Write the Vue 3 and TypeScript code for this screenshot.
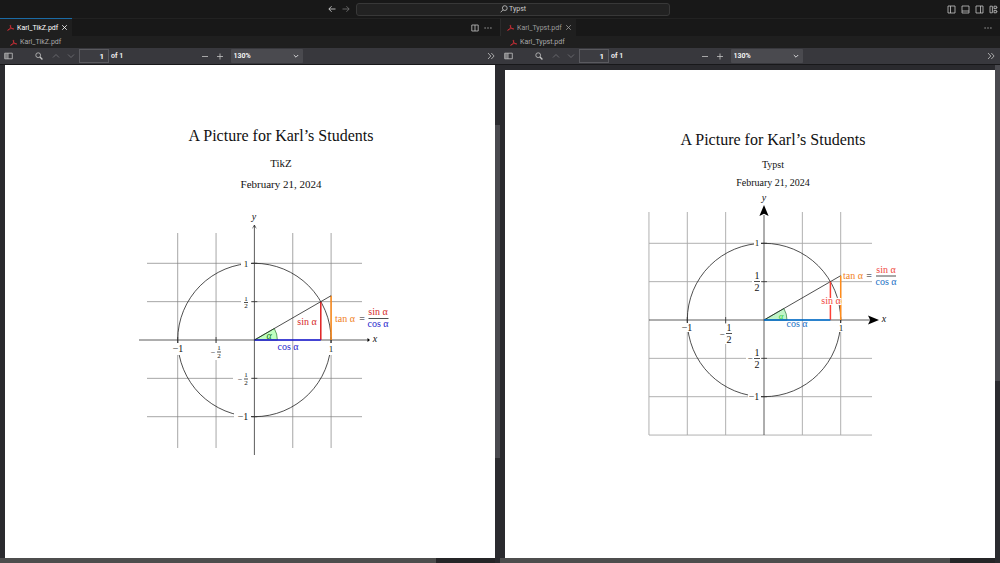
<script setup lang="ts">
import { ref } from 'vue'

interface Label {
  x: number
  y: number
  text: string
  kind?: string
  anchor?: 'start' | 'middle' | 'end'
  size?: number
}
interface Line {
  x1: number
  y1: number
  x2: number
  y2: number
  kind?: string
}
interface Box {
  x: number
  y: number
  w: number
  h: number
}
interface Figure {
  viewBox: string
  width: number
  height: number
  cx: number
  cy: number
  grid: Line[]
  boxes: Box[]
  axes: Line[]
  arrows: { d: string; filled: boolean }[]
  wedge: string
  shapes: Line[]
  labels: Label[]
  bars: Line[]
}
interface Pane {
  id: string
  file: string
  active: boolean
  title: string
  author: string
  date: string
  figure: Figure
}

const R = 76.7
const H = R / 2

function grid(cx: number, cy: number, xs: number[], ys: number[], x: [number, number], y: [number, number]): Line[] {
  return [
    ...xs.map((k) => ({ x1: cx + k * H, x2: cx + k * H, y1: y[0], y2: y[1] })),
    ...ys.map((k) => ({ y1: cy + k * H, y2: cy + k * H, x1: x[0], x2: x[1] })),
  ]
}

function wedge(cx: number, cy: number): string {
  return `M${cx} ${cy}h23a23 23 0 0 0 -3.1 -11.5z`
}

const tikz: Figure = {
  viewBox: '131 205 300 260',
  width: 300,
  height: 260,
  cx: 254.4,
  cy: 340,
  grid: grid(254.4, 340, [-2, -1, 1, 2], [-2, -1, 1, 2], [147, 362], [233, 448]),
  boxes: [
    { x: 241, y: 257, w: 10, h: 13 },
    { x: 241, y: 293, w: 10, h: 18 },
    { x: 233, y: 369, w: 18, h: 18 },
    { x: 234, y: 410, w: 17, h: 13 },
    { x: 168, y: 343, w: 19, h: 12 },
    { x: 208, y: 343, w: 15, h: 17 },
    { x: 327, y: 343, w: 8, h: 12 },
  ],
  axes: [
    { x1: 139, y1: 340, x2: 369, y2: 340 },
    { x1: 254.4, y1: 226, x2: 254.4, y2: 455 },
    ...[-2, -1, 2].map((k) => ({ x1: 254.4 + k * H, x2: 254.4 + k * H, y1: 337, y2: 343 })),
    ...[-2, -1, 1, 2].map((k) => ({ x1: 251.5, x2: 257.3, y1: 340 + k * H, y2: 340 + k * H })),
  ],
  arrows: [
    { d: 'M252.4 228Q254 227 254.4 225Q254.8 227 256.4 228', filled: false },
    { d: 'M367.5 338L370 340L367.5 342Z', filled: true },
  ],
  wedge: wedge(254.4, 340),
  shapes: [
    { x1: 320.8, y1: 340, x2: 320.8, y2: 301.7, kind: 'red wide' },
    { x1: 254.4, y1: 340, x2: 320.8, y2: 340, kind: 'blue wide' },
    { x1: 331.1, y1: 340, x2: 331.1, y2: 295.7, kind: 'orange wide' },
    { x1: 254.4, y1: 340, x2: 331.1, y2: 295.7, kind: 'ink' },
  ],
  labels: [
    { x: 254, y: 220, text: 'y', kind: 'it', size: 10 },
    { x: 375, y: 342, text: 'x', kind: 'it', size: 10 },
    { x: 246, y: 267, text: '1' },
    { x: 246, y: 301, text: '1', size: 7 },
    { x: 246, y: 308, text: '2', size: 7 },
    { x: 240, y: 382, text: '−', size: 8 },
    { x: 246, y: 377, text: '1', size: 7 },
    { x: 246, y: 385, text: '2', size: 7 },
    { x: 243, y: 420, text: '−1', size: 10 },
    { x: 178, y: 352, text: '−1', size: 10 },
    { x: 213, y: 355, text: '−', size: 8 },
    { x: 219, y: 350, text: '1', size: 7 },
    { x: 219, y: 358, text: '2', size: 7 },
    { x: 331, y: 352, text: '1' },
    { x: 269, y: 339, text: 'α', kind: 'it green', size: 10 },
    { x: 307, y: 325, text: 'sin α', kind: 'red', size: 10 },
    { x: 288, y: 350, text: 'cos α', kind: 'blue', size: 10 },
    { x: 335, y: 322, text: 'tan α', kind: 'orange', anchor: 'start', size: 10 },
    { x: 362, y: 322, text: '=', size: 10 },
    { x: 378, y: 315, text: 'sin α', kind: 'red', size: 10 },
    { x: 378, y: 327, text: 'cos α', kind: 'blue', size: 10 },
  ],
  bars: [
    { x1: 244, y1: 302.5, x2: 248, y2: 302.5 },
    { x1: 244, y1: 379, x2: 248, y2: 379 },
    { x1: 217, y1: 352, x2: 221, y2: 352 },
    { x1: 368.5, y1: 318.5, x2: 388.5, y2: 318.5 },
  ],
}

const typst: Figure = {
  viewBox: '633 190 280 260',
  width: 280,
  height: 260,
  cx: 764,
  cy: 320,
  grid: grid(764, 320, [-3, -2, -1, 1, 2], [-2, -1, 1, 2, 3], [649, 872], [212, 435]),
  boxes: [
    { x: 754, y: 238, w: 7, h: 10 },
    { x: 752, y: 270, w: 10, h: 23 },
    { x: 746, y: 347, w: 16, h: 23 },
    { x: 748, y: 392, w: 13, h: 9 },
    { x: 681, y: 323, w: 13, h: 9 },
    { x: 718, y: 324, w: 16, h: 20 },
    { x: 838, y: 323, w: 6, h: 9 },
  ],
  axes: [
    { x1: 649, y1: 320, x2: 870, y2: 320 },
    { x1: 764, y1: 215, x2: 764, y2: 435 },
    ...[-2, -1, 2].map((k) => ({ x1: 764 + k * H, x2: 764 + k * H, y1: 317, y2: 323 })),
    ...[-2, -1, 1, 2].map((k) => ({ x1: 761, x2: 767, y1: 320 + k * H, y2: 320 + k * H })),
  ],
  arrows: [
    { d: 'M764 205L768.6 216L764 213.8L759.4 216Z', filled: true },
    { d: 'M879 320L868 324.6L870.2 320L868 315.4Z', filled: true },
  ],
  wedge: wedge(764, 320),
  shapes: [
    { x1: 764, y1: 320, x2: 840.7, y2: 275.7, kind: 'ink' },
    { x1: 830.4, y1: 320, x2: 830.4, y2: 281.7, kind: 'coral wide' },
    { x1: 764, y1: 320, x2: 830.4, y2: 320, kind: 'azure wide' },
    { x1: 840.7, y1: 320, x2: 840.7, y2: 275.7, kind: 'orange wide' },
  ],
  labels: [
    { x: 764, y: 201, text: 'y', kind: 'it', size: 10 },
    { x: 884, y: 322, text: 'x', kind: 'it', size: 10 },
    { x: 757, y: 246, text: '1' },
    { x: 757, y: 279, text: '1', size: 10 },
    { x: 757, y: 291, text: '2', size: 10 },
    { x: 750, y: 361, text: '−' },
    { x: 757, y: 356, text: '1', size: 10 },
    { x: 757, y: 368, text: '2', size: 10 },
    { x: 754, y: 400, text: '−1', size: 10 },
    { x: 687, y: 331, text: '−1', size: 10 },
    { x: 722, y: 337, text: '−' },
    { x: 729, y: 331, text: '1', size: 10 },
    { x: 729, y: 343, text: '2', size: 10 },
    { x: 841, y: 331, text: '1' },
    { x: 781, y: 319, text: 'α', kind: 'it lime', size: 9 },
    { x: 831, y: 304, text: 'sin α', kind: 'coral halo', size: 10 },
    { x: 797, y: 327, text: 'cos α', kind: 'azure', size: 10 },
    { x: 843, y: 279, text: 'tan α', kind: 'orange', anchor: 'start', size: 10 },
    { x: 869, y: 279, text: '=', size: 10 },
    { x: 886, y: 273, text: 'sin α', kind: 'coral', size: 10 },
    { x: 886, y: 285, text: 'cos α', kind: 'azure', size: 10 },
  ],
  bars: [
    { x1: 754, y1: 281.5, x2: 760, y2: 281.5 },
    { x1: 754, y1: 358.5, x2: 760, y2: 358.5 },
    { x1: 726, y1: 333.5, x2: 732, y2: 333.5 },
    { x1: 876, y1: 276, x2: 896, y2: 276 },
  ],
}

const panes: Pane[] = [
  {
    id: 'tikz',
    file: 'Karl_TikZ.pdf',
    active: true,
    title: 'A Picture for Karl’s Students',
    author: 'TikZ',
    date: 'February 21, 2024',
    figure: tikz,
  },
  {
    id: 'typst',
    file: 'Karl_Typst.pdf',
    active: false,
    title: 'A Picture for Karl’s Students',
    author: 'Typst',
    date: 'February 21, 2024',
    figure: typst,
  },
]

const pageNumbers = ref(['1', '1'])
const zooms = ref(['130%', '130%'])

const pdfPath = 'M1 6.3C2.8 5.6 3.9 3.4 3.7 1.4C3.6 .7 3.1 .9 3.2 1.6C3.5 3.6 4.6 4.6 6.4 5.2C7 5.4 7 4.6 6.3 4.5C4.2 4.4 2.4 4.9 .9 5.8C.3 6.2 .5 6.6 1 6.3Z'
</script>

<template>
  <div class="window">
    <header class="titlebar">
      <div class="side"></div>
      <div class="center">
        <button class="icon bright" aria-label="Go back">
          <svg width="8" height="8" viewBox="0 0 8 8"><path d="M7.5 4H1M3.6 1.2L.8 4l2.8 2.8" /></svg>
        </button>
        <button class="icon dim" aria-label="Go forward">
          <svg width="8" height="8" viewBox="0 0 8 8"><path d="M.5 4H7M4.4 1.2L7.2 4L4.4 6.8" /></svg>
        </button>
        <button class="command">
          <svg width="8" height="8" viewBox="0 0 8 8"><circle cx="4.8" cy="3.1" r="2.4" /><path d="M3 4.8L.7 7.3" /></svg>
          <span>Typst</span>
        </button>
      </div>
      <div class="side layout">
        <button class="icon" aria-label="Toggle primary side bar">
          <svg width="9" height="9" viewBox="0 0 9 9"><path d="M1 1h7v7H1zM3.5 1v7" /></svg>
        </button>
        <button class="icon" aria-label="Toggle panel">
          <svg width="9" height="9" viewBox="0 0 9 9"><path d="M1 1h7v7H1zM1 6h7" /></svg>
        </button>
        <button class="icon" aria-label="Toggle secondary side bar">
          <svg width="9" height="9" viewBox="0 0 9 9"><path d="M1 1h7v7H1zM5.5 1v7" /></svg>
        </button>
        <button class="icon" aria-label="Customize layout">
          <svg width="9" height="9" viewBox="0 0 9 9"><path d="M1 1.2h2.4v6.6H1zM5 1.2h2.4v2.4H5zM5 5.4h2.4v2.4H5zM7.8 2.4h.7M7.8 6.6h.7" /></svg>
        </button>
      </div>
    </header>

    <main class="editors">
      <section v-for="(pane, i) in panes" :key="pane.id" class="pane" :class="pane.id" :aria-label="pane.file">
        <div class="tabs">
          <div class="tab" :class="{ active: pane.active }">
            <svg class="pdf" width="7" height="7" viewBox="0 0 7 7"><path :d="pdfPath" /></svg>
            <span>{{ pane.file }}</span>
            <button class="icon" aria-label="Close tab">
              <svg width="7" height="7" viewBox="0 0 7 7"><path d="M1.2 1.2l4.6 4.6M5.8 1.2L1.2 5.8" /></svg>
            </button>
          </div>
          <div class="actions">
            <button v-if="pane.active" class="icon" aria-label="Split editor">
              <svg width="8" height="8" viewBox="0 0 8 8"><path d="M.8 1h6.4v6H.8zM4 1v6" /></svg>
            </button>
            <button class="icon" aria-label="More actions">
              <svg width="8" height="8" viewBox="0 0 8 8"><path class="solid" d="M.5 3.4h1.2v1.2H.5zM3.4 3.4h1.2v1.2H3.4zM6.3 3.4h1.2v1.2H6.3z" /></svg>
            </button>
          </div>
        </div>
        <nav class="crumbs" aria-label="Breadcrumb">
          <svg class="pdf" width="7" height="7" viewBox="0 0 7 7"><path :d="pdfPath" /></svg>
          <span>{{ pane.file }}</span>
        </nav>

        <div class="toolbar">
          <div class="group">
            <button class="icon sidebar" aria-label="Toggle sidebar">
              <svg width="9" height="8" viewBox="0 0 9 8"><path d="M.7 1.2h7.6v5.6H.7zM4 1.2v5.6" /><path class="solid" d="M1 1.4h2.6v5.2H1z" opacity=".5" /></svg>
            </button>
            <button class="icon find" aria-label="Find">
              <svg width="8" height="8" viewBox="0 0 8 8"><circle cx="3.2" cy="3.2" r="2.4" /><path d="M5 5l2.4 2.5" stroke-width="1.3" /></svg>
            </button>
            <button class="icon faint" aria-label="Previous page">
              <svg width="8" height="8" viewBox="0 0 8 8"><path d="M1 5.5L4 2.5l3 3" /></svg>
            </button>
            <button class="icon faint next" aria-label="Next page">
              <svg width="8" height="8" viewBox="0 0 8 8"><path d="M1 2.5l3 3l3-3" /></svg>
            </button>
            <input v-model="pageNumbers[i]" class="page-number" aria-label="Page" />
            <span class="count">of 1</span>
          </div>
          <div class="group zoom">
            <button class="icon" aria-label="Zoom out">
              <svg width="8" height="8" viewBox="0 0 8 8"><path d="M1 4.5h6" /></svg>
            </button>
            <button class="icon" aria-label="Zoom in">
              <svg width="8" height="8" viewBox="0 0 8 8"><path d="M1 4.5h6M4 1.5v6" /></svg>
            </button>
            <div class="picker">
              <select v-model="zooms[i]" aria-label="Zoom">
                <option>100%</option>
                <option>130%</option>
                <option>200%</option>
              </select>
              <svg class="caret" width="6" height="6" viewBox="0 0 6 6"><path d="M.8 2L3 4.2L5.2 2" /></svg>
            </div>
          </div>
          <div class="group end">
            <button class="icon" aria-label="Tools">
              <svg width="8" height="8" viewBox="0 0 8 8"><path d="M1 1l2.8 3L1 7M4.3 1l2.8 3l-2.8 3" /></svg>
            </button>
          </div>
        </div>

        <div class="viewer">
          <div class="viewport">
            <article class="paper">
              <h1>{{ pane.title }}</h1>
              <p class="author">{{ pane.author }}</p>
              <p class="date">{{ pane.date }}</p>
              <svg
                class="figure"
                :width="pane.figure.width"
                :height="pane.figure.height"
                :viewBox="pane.figure.viewBox"
                role="img"
                aria-label="Sine, cosine and tangent on the unit circle"
              >
                <line v-for="(l, n) in pane.figure.grid" :key="'g' + n" class="grid" :x1="l.x1" :y1="l.y1" :x2="l.x2" :y2="l.y2" />
                <circle class="ink" :cx="pane.figure.cx" :cy="pane.figure.cy" :r="R" />
                <rect v-for="(b, n) in pane.figure.boxes" :key="'b' + n" class="mask" :x="b.x" :y="b.y" :width="b.w" :height="b.h" />
                <path class="wedge" :d="pane.figure.wedge" />
                <line v-for="(l, n) in pane.figure.axes" :key="'a' + n" class="axis" :x1="l.x1" :y1="l.y1" :x2="l.x2" :y2="l.y2" />
                <path v-for="(a, n) in pane.figure.arrows" :key="'h' + n" :class="a.filled ? 'head' : 'ink'" :d="a.d" />
                <line v-for="(l, n) in pane.figure.shapes" :key="'s' + n" :class="l.kind" :x1="l.x1" :y1="l.y1" :x2="l.x2" :y2="l.y2" />
                <line v-for="(l, n) in pane.figure.bars" :key="'f' + n" class="ink" :x1="l.x1" :y1="l.y1" :x2="l.x2" :y2="l.y2" />
                <text
                  v-for="(t, n) in pane.figure.labels"
                  :key="'t' + n"
                  :class="t.kind"
                  :x="t.x"
                  :y="t.y"
                  :font-size="t.size ?? 9"
                  :text-anchor="t.anchor ?? 'middle'"
                >{{ t.text }}</text>
              </svg>
            </article>
          </div>
          <div class="vbar"><div class="thumb"></div></div>
          <div class="hbar"><div class="thumb"></div></div>
        </div>
      </section>
    </main>
  </div>
</template>

<style>
body {
  margin: 0;
  background: #181818;
}
</style>

<style scoped>
.window {
  display: flex;
  flex-direction: column;
  height: 100vh;
  overflow: hidden;
  background: #181818;
  color: #ccc;
  font-family: Roboto, "Noto Sans", sans-serif;
  font-size: 7px;
  line-height: 10px;
}
button {
  border: 0;
  padding: 0;
  background: none;
  color: inherit;
  font: inherit;
}
svg {
  display: block;
  flex: none;
  fill: none;
  stroke: currentColor;
  stroke-width: 0.8;
}
.solid {
  fill: currentColor;
  stroke: none;
}
.icon {
  display: flex;
  align-items: center;
  justify-content: center;
  color: #c4c4c4;
}
.bright { color: #ddd; }
.dim { color: #777; }
.faint { color: #737378; }

.titlebar {
  display: flex;
  align-items: center;
  height: 18px;
  flex: none;
}
.side { flex: 1; }
.layout {
  display: flex;
  justify-content: flex-end;
  gap: 5px;
  padding-right: 2px;
}
.center {
  display: flex;
  align-items: center;
  gap: 6px;
  width: 342px;
}
.command {
  display: flex;
  flex: 1;
  align-items: center;
  justify-content: center;
  gap: 1px;
  height: 13px;
  border: 1px solid #383838;
  border-radius: 3px;
  background: #222;
}

.editors {
  display: flex;
  flex: 1;
  min-height: 0;
}
.pane {
  display: flex;
  flex: 1 1 0;
  flex-direction: column;
  min-width: 0;
}
.tabs {
  display: flex;
  justify-content: space-between;
  height: 18px;
  flex: none;
  border-top: 1px solid #222;
  box-sizing: border-box;
}
.typst .tabs { border-left: 1px solid #2b2b2b; }
.tab {
  display: flex;
  align-items: center;
  gap: 3px;
  padding: 0 4px 0 6px;
  background: #1f1f1f;
  color: #9d9d9d;
}
.tab.active {
  margin-top: -1px;
  border-top: 1px solid #1b6ba5;
  padding-left: 7px;
  color: #fff;
}
.tab .icon { color: inherit; }
.pdf {
  color: #d8313a;
  stroke-width: 0.7;
}
.actions {
  display: flex;
  align-items: center;
  gap: 5px;
  padding-right: 8px;
}
.crumbs {
  display: flex;
  align-items: center;
  gap: 3px;
  height: 12px;
  flex: none;
  padding-left: 10px;
  background: #1f1f1f;
  color: #a9a9a9;
}

.toolbar {
  display: grid;
  grid-template-columns: 1fr auto 1fr;
  height: 17px;
  flex: none;
  box-sizing: border-box;
  border-bottom: 1px solid #18181a;
  background: #38383d;
  color: #f9f9fa;
  font-size: 7px;
  font-weight: 600;
}
.group {
  display: flex;
  align-items: center;
}
.sidebar { margin: 0 22px 0 4px; }
.find { margin-right: 9px; }
.next { margin: 0 4px 0 7px; }
.page-number {
  width: 30px;
  height: 14px;
  box-sizing: border-box;
  border: 1px solid #5a5a5f;
  padding: 0 4px;
  background: #3c3c41;
  color: #fff;
  font: 600 8px/10px Roboto, "Noto Sans", sans-serif;
  text-align: right;
}
.count { margin-left: 2px; }
.zoom {
  gap: 7px;
  padding-left: 3px;
}
.picker {
  display: flex;
  align-items: center;
  justify-content: flex-end;
  position: relative;
}
.picker select {
  width: 72px;
  height: 14px;
  appearance: none;
  border: 0;
  border-radius: 1px;
  padding: 0 3px;
  background: #4a4a4f;
  color: #fff;
  font: inherit;
}
.caret {
  position: absolute;
  right: 4px;
  pointer-events: none;
}
.end {
  justify-content: flex-end;
  padding-right: 5px;
}

.viewer {
  display: grid;
  grid-template-columns: minmax(0, 1fr) 5px;
  grid-template-rows: minmax(0, 1fr) 5px;
  flex: 1;
  min-height: 0;
  background: #2a2a2e;
}
.viewport {
  overflow: hidden;
  padding-left: 5px;
}
.typst .viewport { padding-top: 5px; }
.vbar { background: #2b2b2f; }
.hbar { background: #252527; }
.vbar .thumb {
  height: 77%;
  background: #49494e;
}
.hbar .thumb {
  width: 88%;
  height: 5px;
  background: #4d4d4d;
}
.typst .hbar .thumb { width: 91%; }
.tikz .vbar { padding-top: 60px; }
.typst .vbar .thumb { height: 64%; }

.paper {
  display: flex;
  flex-direction: column;
  align-items: center;
  box-sizing: border-box;
  width: 552px;
  min-height: 100%;
  padding-top: 61px;
  background: #fff;
  color: #111;
  font-family: "Liberation Serif", serif;
}
.typst .paper {
  width: 536px;
  padding-top: 60px;
}
h1, p {
  margin: 0;
  font-weight: 400;
}
h1 {
  font-size: 16px;
  line-height: 20px;
}
p {
  font-size: 11px;
  line-height: 14px;
}
.author { margin-top: 10px; }
.date { margin: 7px 0 14px; }
.typst p { font-size: 10px; }
.typst .author { margin-top: 8px; }
.typst .date { margin: 4px 0 0; }

.figure { stroke: none; }
.grid { stroke: #808080; stroke-width: 0.7; }
.typst .grid { stroke: #a8a8a8; stroke-width: 0.9; }
.axis { stroke: #333; stroke-width: 0.8; }
.mask { fill: #fff; }
.wedge { fill: #bfffbf; stroke: #2a7a2a; stroke-width: 0.7; }
.typst .wedge { fill: #c0f5c8; stroke: #2f7a3c; }
.head { fill: #000; }
.ink { stroke: #222; stroke-width: 0.8; }
.wide { stroke-width: 1.5; }
line.red { stroke: #e02020; }
line.blue { stroke: #2222e0; }
line.orange { stroke: #ff8c1a; }
line.coral { stroke: #ff4136; }
line.azure { stroke: #0074d9; }
text { fill: #111; }
.it { font-style: italic; }
text.red { fill: #d62a2a; }
text.blue { fill: #2626cc; }
text.orange { fill: #f0811e; }
text.coral { fill: #f0483e; }
text.azure { fill: #1a70c4; }
text.green { fill: #1d7a1d; }
text.lime { fill: #2ecc40; }
.halo {
  paint-order: stroke;
  stroke: #fff;
  stroke-width: 2;
}
</style>
